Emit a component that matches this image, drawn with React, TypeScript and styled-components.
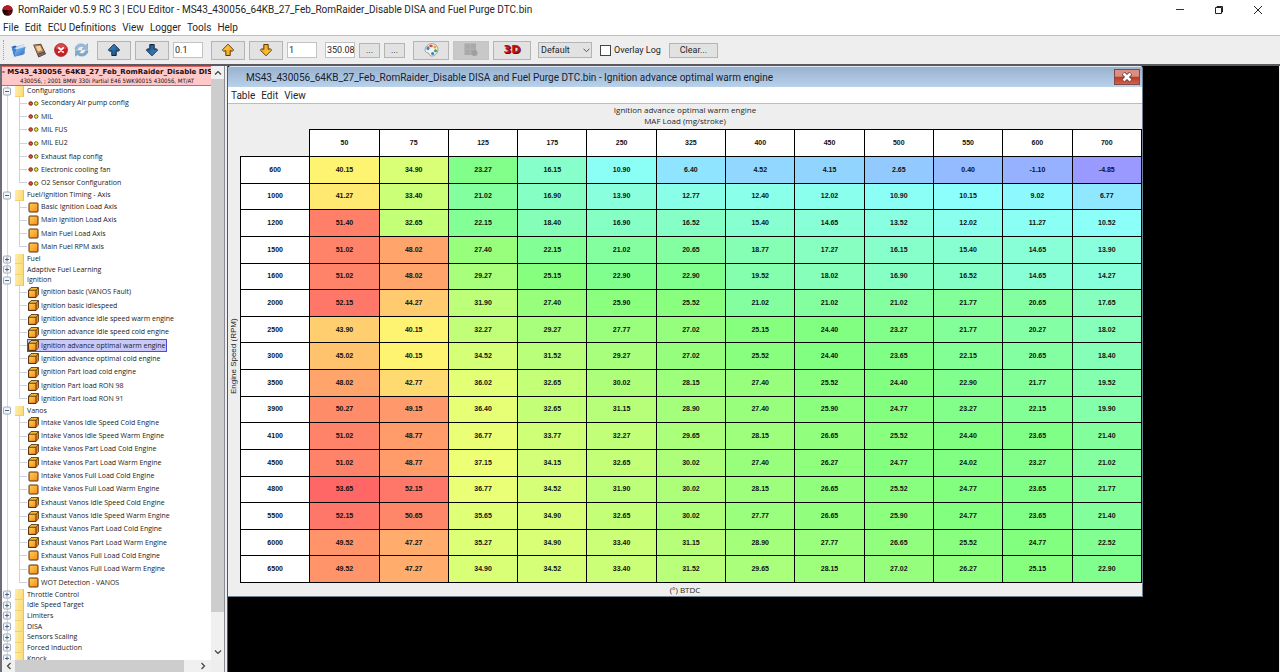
import React from "react";
import styled, { createGlobalStyle } from "styled-components";

const UI_FONT = 'Roboto, "Open Sans", sans-serif';
const TREE_FONT = '"Open Sans", "Noto Sans", sans-serif';
const CELL_FONT = '"Liberation Sans", Arial, sans-serif';

const GlobalStyle = createGlobalStyle`
  * { box-sizing: border-box; }
  body { margin: 0; background: #eeeeee; font-family: ${UI_FONT}; color: #262626; }
  button, input, select { font: inherit; color: inherit; }
`;

const Shell = styled.div`
  display: flex;
  flex-direction: column;
  height: 100vh;
  overflow: hidden;
`;

const TitleBar = styled.header`
  display: flex;
  align-items: center;
  gap: 5px;
  height: 20px;
  padding: 0 14px 0 2px;
  background: #fff;
  flex: none;
`;

const Title = styled.h1`
  margin: 0;
  flex: 1;
  font-size: 10px;
  font-weight: 400;
  line-height: 20px;
  white-space: nowrap;
`;

const WindowControls = styled.div`
  display: flex;
  gap: 23px;
`;

const CaptionButton = styled.button`
  display: flex;
  align-items: center;
  justify-content: center;
  width: 16px;
  height: 16px;
  padding: 0;
  border: 0;
  background: none;
`;

const MenuBar = styled.nav<{ $inner?: boolean }>`
  display: flex;
  gap: 6px;
  height: ${(p) => (p.$inner ? 17 : 16)}px;
  padding: 1px 0 0 3px;
  background: #fff;
  border-bottom: 1px solid #bdbdbd;
  flex: none;
`;

const MenuItem = styled.button`
  padding: 0;
  border: 0;
  background: none;
  font-size: 10px;
  line-height: 14px;
  white-space: nowrap;
`;

const Toolbar = styled.div`
  display: flex;
  align-items: center;
  gap: 8px;
  height: 28px;
  padding-left: 3px;
  background: #eeeeee;
  font-size: 9px;
  flex: none;
`;

const Handle = styled.span`
  height: 20px;
  border-left: 1px dotted #8fa3bd;
  margin-right: -1px;
`;

const ToolGroup = styled.div<{ $gap?: number }>`
  display: flex;
  align-items: center;
  gap: ${(p) => p.$gap ?? 4}px;
`;

const IconButton = styled.button`
  display: flex;
  width: 15px;
  height: 16px;
  padding: 0;
  border: 0;
  background: none;
  align-items: center;
  justify-content: center;
`;

const ToolButton = styled.button<{ $w: number; $short?: boolean }>`
  display: flex;
  align-items: center;
  justify-content: center;
  width: ${(p) => p.$w}px;
  height: ${(p) => (p.$short ? 15 : 19)}px;
  padding: 0;
  border: 1px solid #b4b4b4;
  background: #e2e2e2;
  line-height: 12px;
  &:disabled { background: #c8c8c8; border-color: #c4c4c4; }
`;

const NumberBox = styled.input<{ $w: number }>`
  width: ${(p) => p.$w}px;
  height: 16px;
  padding: 0 0 0 1px;
  border: 1px solid #c2c2c2;
  background: #fff;
`;

const SelectWrap = styled.div`
  position: relative;
  width: 54px;
  height: 16px;
  margin-left: -1px;
  svg { position: absolute; right: 2px; top: 6px; pointer-events: none; }
`;

const Select = styled.select`
  appearance: none;
  width: 100%;
  height: 100%;
  padding: 0 2px;
  border: 1px solid #b4b4b4;
  border-radius: 0;
  background: #e2e2e2;
`;

const CheckLabel = styled.label`
  display: flex;
  align-items: center;
  gap: 3px;
  white-space: nowrap;
`;

const Check = styled.input`
  appearance: none;
  width: 11px;
  height: 11px;
  margin: 0;
  border: 1px solid #444;
  background: #fff;
`;

const ThreeD = styled.span`
  font: 900 11px/12px "DejaVu Sans", sans-serif;
  color: #c01018;
  text-shadow: 1px 1px 0 #5c0a0c;
`;

const Main = styled.div`
  display: flex;
  flex: 1;
  min-height: 0;
  border-top: 2px solid #5a5a60;
`;

const Sidebar = styled.aside`
  display: grid;
  grid-template-columns: 1fr 13px;
  grid-template-rows: 1fr 12px;
  width: 225px;
  flex: none;
  border-left: 2px solid #6e6e78;
  border-right: 1px solid #8a8a92;
  background: #eeeeee;
`;

const TreePane = styled.div`
  min-width: 0;
  overflow: hidden;
  background: #fff;
`;

const RomNode = styled.div`
  height: 20px;
  border: 1px solid #e06060;
  border-width: 1px 0;
  background: #ffc8c8;
  overflow: hidden;
  white-space: nowrap;
  color: #1a1010;
`;

const RomName = styled.strong`
  display: block;
  font: 700 7px/10px "DejaVu Sans", sans-serif;
`;

const RomInfo = styled.span`
  display: block;
  padding-left: 18px;
  font: 6px/8px "DejaVu Sans Condensed", "DejaVu Sans", sans-serif;
`;

const Tree = styled.ul`
  display: flex;
  flex-direction: column;
  height: 578px;
  margin: 0;
  padding: 0 0 0 1px;
  list-style: none;
  font: 7px/10px ${TREE_FONT};
  color: #222;
`;

const Folder = styled.li`
  position: relative;
  display: flex;
  align-items: center;
  flex: 4 0 0;
  min-height: 0;
  white-space: nowrap;
  &::before {
    content: "";
    position: absolute;
    left: 4px;
    top: 0;
    bottom: 0;
    border-left: 1px solid #d5dae2;
  }
`;

const Expander = styled.svg`
  position: relative;
  margin-right: 4px;
  flex: none;
`;

const FolderIcon = styled.span`
  width: 9px;
  align-self: stretch;
  margin-right: 3px;
  border-right: 1px solid #e8c34d;
  border-bottom: 1px solid #f0d070;
  background: linear-gradient(100deg, #ffedaa, #fbdb74);
`;

const Leaf = styled.li<{ $last?: boolean }>`
  position: relative;
  display: flex;
  align-items: center;
  flex: 5 0 0;
  min-height: 0;
  padding-left: 24px;
  white-space: nowrap;
  &::before {
    content: "";
    position: absolute;
    left: 4px;
    width: 12px;
    top: 0;
    bottom: 0;
    border-left: 1px solid #d5dae2;
  }
  &::after {
    content: "";
    position: absolute;
    left: 16px;
    width: 7px;
    top: 0;
    bottom: ${(p) => (p.$last ? "50%" : "0")};
    border-left: 1px solid #ccd3de;
    background: linear-gradient(#ccd3de, #ccd3de) no-repeat 0 ${(p) => (p.$last ? "100%" : "50%")} / 100% 1px;
  }
`;

const LeafBody = styled.span<{ $selected?: boolean }>`
  display: flex;
  align-items: center;
  gap: 2px;
  height: 13px;
  border: 1px solid ${(p) => (p.$selected ? "#4c4cd8" : "transparent")};
  background: ${(p) => (p.$selected ? "#c8c8fa" : "transparent")};
  svg { flex: none; }
`;

const VScroll = styled.div`
  display: flex;
  flex-direction: column;
  align-items: center;
  padding-bottom: 2px;
  background: #f0f0f0;
`;

const VThumb = styled.div`
  flex: 1;
  width: 100%;
  margin-bottom: 33px;
  background: #cdcdcd;
`;

const HScroll = styled.div`
  display: flex;
  align-items: center;
  padding-right: 2px;
  background: #f0f0f0;
`;

const HThumb = styled.div`
  flex: 1;
  height: 100%;
  margin-right: 12px;
  background: #cdcdcd;
`;

const ScrollArrow = styled.button`
  display: flex;
  align-items: center;
  justify-content: center;
  width: 13px;
  height: 13px;
  padding: 0;
  border: 0;
  background: #f0f0f0;
  flex: none;
`;

const Desktop = styled.main`
  flex: 1;
  min-width: 0;
  margin-left: 2px;
  margin-right: 1px;
  padding-right: 136px;
  border-left: 1px solid #55555c;
  background: #000;
`;

const Frame = styled.section`
  display: flex;
  flex-direction: column;
  border: 1px solid #6f7f92;
  border-top-color: #dfe8f2;
  border-left-width: 0;
  border-radius: 3px 3px 0 0;
  background: #eeeeee;
  overflow: hidden;
`;

const FrameTitle = styled.div`
  display: flex;
  align-items: center;
  height: 20px;
  padding: 0 2px 0 18px;
  background: linear-gradient(#98b2cf, #b9d1ea);
`;

const FrameName = styled.h2`
  margin: 0;
  flex: 1;
  font-size: 10px;
  font-weight: 400;
  white-space: nowrap;
  color: #16202c;
`;

const FrameClose = styled.button`
  display: flex;
  align-items: center;
  justify-content: center;
  width: 26px;
  height: 16px;
  padding: 0;
  border: 1px solid #7c4a48;
  background: linear-gradient(#dc8e80 0 45%, #b93a24 50%, #d0604c);
`;

const Caption = styled.div`
  padding-bottom: 3px;
  font: 8px/11px ${TREE_FONT};
  text-align: center;
`;

const FrameBody = styled.div`
  display: flex;
  align-items: stretch;
`;

const AxisLabel = styled.div`
  display: flex;
  align-items: center;
  justify-content: center;
  width: 12px;
  flex: none;
  font: 8px/12px ${CELL_FONT};
  writing-mode: vertical-rl;
  transform: rotate(180deg);
  white-space: nowrap;
`;

const TableArea = styled.div`
  flex: 1;
  min-width: 0;
`;

const Units = styled.div`
  font: 8px/13px ${TREE_FONT};
  text-align: center;
`;

const MapTable = styled.table`
  width: 100%;
  height: 454px;
  border-collapse: collapse;
  table-layout: fixed;
  font: 700 7px/8px ${CELL_FONT};
  text-align: center;
  color: #111;
  th, td { padding: 0; border: 1px solid #000; }
  th { background: #fff; }
  thead tr { height: 27px; }
  thead td { border-top: 0; border-left: 0; }
`;

const ValueCell = styled.td<{ $color: string }>`
  background: ${(p) => p.$color};
`;

const LOADS = [50, 75, 125, 175, 250, 325, 400, 450, 500, 550, 600, 700];

const ROWS: [number, string][] = [
  [600, "40.15 34.90 23.27 16.15 10.90 6.40 4.52 4.15 2.65 0.40 -1.10 -4.85"],
  [1000, "41.27 33.40 21.02 16.90 13.90 12.77 12.40 12.02 10.90 10.15 9.02 6.77"],
  [1200, "51.40 32.65 22.15 18.40 16.90 16.52 15.40 14.65 13.52 12.02 11.27 10.52"],
  [1500, "51.02 48.02 27.40 22.15 21.02 20.65 18.77 17.27 16.15 15.40 14.65 13.90"],
  [1600, "51.02 48.02 29.27 25.15 22.90 22.90 19.52 18.02 16.90 16.52 14.65 14.27"],
  [2000, "52.15 44.27 31.90 27.40 25.90 25.52 21.02 21.02 21.02 21.77 20.65 17.65"],
  [2500, "43.90 40.15 32.27 29.27 27.77 27.02 25.15 24.40 23.27 21.77 20.27 18.02"],
  [3000, "45.02 40.15 34.52 31.52 29.27 27.02 25.52 24.40 23.65 22.15 20.65 18.40"],
  [3500, "48.02 42.77 36.02 32.65 30.02 28.15 27.40 25.52 24.40 22.90 21.77 19.52"],
  [3900, "50.27 49.15 36.40 32.65 31.15 28.90 27.40 25.90 24.77 23.27 22.15 19.90"],
  [4100, "51.02 48.77 36.77 33.77 32.27 29.65 28.15 26.65 25.52 24.40 23.65 21.40"],
  [4500, "51.02 48.77 37.15 34.15 32.65 30.02 27.40 26.27 24.77 24.02 23.27 21.02"],
  [4800, "53.65 52.15 36.77 34.52 31.90 30.02 28.15 26.65 25.52 24.77 23.65 21.77"],
  [5500, "52.15 50.65 35.65 34.90 32.65 30.02 27.77 26.65 25.90 24.77 23.65 21.40"],
  [6000, "49.52 47.27 35.27 34.90 33.40 31.15 28.90 27.77 26.65 25.52 24.77 22.52"],
  [6500, "49.52 47.27 34.90 34.52 33.40 31.52 29.65 28.15 27.02 26.27 25.15 22.90"],
];

const MIN = -4.85;
const MAX = 53.65;

// Blend hue and saturation from violet-blue (lowest value) to red (highest) at full brightness.
function heat(value: number): string {
  const t = (value - MIN) / (MAX - MIN);
  const hue = 240 * (1 - t);
  const sat = 0.4 + 0.2 * t;
  return `hsl(${hue.toFixed(1)} 100% ${((1 - sat / 2) * 100).toFixed(1)}%)`;
}

type Kind = "switch" | "flat" | "cube";
type Group = { name: string; open?: boolean; items?: [Kind, string][] };

const GROUPS: Group[] = [
  {
    name: "Configurations",
    open: true,
    items: [
      ["switch", "Secondary Air pump config"],
      ["switch", "MIL"],
      ["switch", "MIL FUS"],
      ["switch", "MIL EU2"],
      ["switch", "Exhaust flap config"],
      ["switch", "Electronic cooling fan"],
      ["switch", "O2 Sensor Configuration"],
    ],
  },
  {
    name: "Fuel/Ignition Timing - Axis",
    open: true,
    items: [
      ["flat", "Basic Ignition Load Axis"],
      ["flat", "Main Ignition Load Axis"],
      ["flat", "Main Fuel Load Axis"],
      ["flat", "Main Fuel RPM axis"],
    ],
  },
  { name: "Fuel" },
  { name: "Adaptive Fuel Learning" },
  {
    name: "Ignition",
    open: true,
    items: [
      ["cube", "Ignition basic (VANOS Fault)"],
      ["cube", "Ignition basic idlespeed"],
      ["cube", "Ignition advance idle speed warm engine"],
      ["cube", "Ignition advance idle speed cold engine"],
      ["cube", "Ignition advance optimal warm engine"],
      ["cube", "Ignition advance optimal cold engine"],
      ["cube", "Ignition Part load cold engine"],
      ["cube", "Ignition Part load RON 98"],
      ["cube", "Ignition Part load RON 91"],
    ],
  },
  {
    name: "Vanos",
    open: true,
    items: [
      ["cube", "Intake Vanos Idle Speed Cold Engine"],
      ["cube", "Intake Vanos Idle Speed Warm Engine"],
      ["cube", "Intake Vanos Part Load Cold Engine"],
      ["cube", "Intake Vanos Part Load Warm Engine"],
      ["flat", "Intake Vanos Full Load Cold Engine"],
      ["flat", "Intake Vanos Full Load Warm Engine"],
      ["cube", "Exhaust Vanos Idle Speed Cold Engine"],
      ["cube", "Exhaust Vanos Idle Speed Warm Engine"],
      ["cube", "Exhaust Vanos Part Load Cold Engine"],
      ["cube", "Exhaust Vanos Part Load Warm Engine"],
      ["flat", "Exhaust Vanos Full Load Cold Engine"],
      ["flat", "Exhaust Vanos Full Load Warm Engine"],
      ["flat", "WOT Detection - VANOS"],
    ],
  },
  { name: "Throttle Control" },
  { name: "Idle Speed Target" },
  { name: "Limiters" },
  { name: "DISA" },
  { name: "Sensors Scaling" },
  { name: "Forced Induction" },
  { name: "Knock" },
];

const SELECTED = "Ignition advance optimal warm engine";

function LeafIcon({ kind }: { kind: Kind }) {
  if (kind === "switch")
    return (
      <svg width="11" height="11" viewBox="0 0 11 11">
        <circle cx="2.7" cy="5.5" r="1.8" fill="#e0502c" stroke="#6b1c10" strokeWidth=".9" />
        <circle cx="8.2" cy="5.5" r="1.8" fill="#f2ee3a" stroke="#55501a" strokeWidth=".9" />
      </svg>
    );
  if (kind === "flat")
    return (
      <svg width="11" height="11" viewBox="0 0 11 11">
        <rect x="1" y="1" width="9" height="9" rx=".8" fill="url(#amber)" stroke="#5a2c0c" strokeWidth="1" />
      </svg>
    );
  return (
    <svg width="11" height="11" viewBox="0 0 11 11">
      <path d="M.6 3.2 3 .6h7.400v7.200L8 10.400H.6z" fill="#ffc93c" stroke="#4a240a" strokeWidth=".9" strokeLinejoin="round" />
      <path d="M8 3.2 10 1v6.700L8 10z" fill="#e88a1a" />
      <path d="M.6 3.2H8v7.200H.6z" fill="url(#amber)" stroke="#4a240a" strokeWidth=".9" />
      <path d="M8 3.2 10.400.7" stroke="#4a240a" strokeWidth=".8" />
    </svg>
  );
}

function Toggle({ open }: { open?: boolean }) {
  return (
    <Expander width="8" height="9" viewBox="0 0 8 9">
      <rect x=".5" y="1" width="7" height="7" rx="1" fill="#f2f5f8" stroke="#8e9bab" strokeWidth=".8" />
      <path d={open ? "M2 4.5h4" : "M2 4.5h4M4 2.5v4"} stroke="#3a5a80" strokeWidth=".9" />
    </Expander>
  );
}

function Arrow({ down, gold }: { down?: boolean; gold?: boolean }) {
  const id = gold ? "gold" : "blue";
  return (
    <svg width="14" height="14" viewBox="0 0 14 14">
      <path
        transform={down ? "rotate(180 7 7)" : undefined}
        d="M7 1.2 12.6 6.9 11.3 8.300 9.200 7.600v4.900H4.800V7.600L2.700 8.300 1.400 6.9z"
        fill={`url(#${id})`}
        stroke={gold ? "#5c3d08" : "#14263c"}
        strokeWidth="1"
        strokeLinejoin="round"
      />
    </svg>
  );
}

function Chevron({ d }: { d: string }) {
  return (
    <svg width="8" height="8" viewBox="0 0 8 8" fill="none" stroke="#404040" strokeWidth="1.200">
      <path d={d} />
    </svg>
  );
}

const HiddenDefs = styled.svg`
  position: absolute;
`;

function Defs() {
  return (
    <HiddenDefs width="0" height="0">
      <defs>
        <linearGradient id="amber" x1="0" y1="0" x2="1" y2="1">
          <stop offset="0" stopColor="#ffd34e" />
          <stop offset="1" stopColor="#f58a1c" />
        </linearGradient>
        <linearGradient id="blue" x1="0" y1="0" x2="1" y2="1">
          <stop offset="0" stopColor="#3f8fd0" />
          <stop offset="1" stopColor="#154a80" />
        </linearGradient>
        <linearGradient id="gold" x1="0" y1="0" x2="1" y2="1">
          <stop offset="0" stopColor="#ffd04a" />
          <stop offset="1" stopColor="#f09a10" />
        </linearGradient>
        <linearGradient id="folder" x1="0" y1="0" x2="1" y2="1">
          <stop offset="0" stopColor="#8cc4f4" />
          <stop offset="1" stopColor="#2468c0" />
        </linearGradient>
      </defs>
    </HiddenDefs>
  );
}

export default function App() {
  return (
    <Shell>
      <GlobalStyle />
      <Defs />
      <TitleBar>
        <svg width="11" height="11" viewBox="0 0 11 11">
          <circle cx="5.5" cy="5.5" r="5.2" fill="#260a0c" />
          <path d="M.6 4.200C1.500 1.500 4 .3 6.500.5 9 .8 10.500 2.800 10.500 4.600L7 5.600 2.500 5z" fill="#c01622" />
          <path d="M4 6.500h6.200C9.700 8.500 8 10 6.500 10.500z" fill="#6c0c14" />
          <path d="M1 6.200 6 6M5 7.500l2 2" stroke="#000" strokeWidth="1" />
        </svg>
        <Title>RomRaider v0.5.9 RC 3 | ECU Editor - MS43_430056_64KB_27_Feb_RomRaider_Disable DISA and Fuel Purge DTC.bin</Title>
        <WindowControls>
          <CaptionButton aria-label="Minimize">
            <svg width="10" height="10" viewBox="0 0 10 10"><path d="M1 4.500h8" stroke="#333" /></svg>
          </CaptionButton>
          <CaptionButton aria-label="Restore">
            <svg width="10" height="10" viewBox="0 0 10 10" fill="none" stroke="#222">
              <path d="M1.500 2.500h6v6h-6zM3 2.500v-1h5.500v5.500h-1" />
            </svg>
          </CaptionButton>
          <CaptionButton aria-label="Close">
            <svg width="10" height="10" viewBox="0 0 10 10"><path d="M1 1l8 8M9 1L1 9" stroke="#222" /></svg>
          </CaptionButton>
        </WindowControls>
      </TitleBar>
      <MenuBar>
        {["File", "Edit", "ECU Definitions", "View", "Logger", "Tools", "Help"].map((m) => (
          <MenuItem key={m}>{m}</MenuItem>
        ))}
      </MenuBar>
      <Toolbar>
        <Handle />
        <ToolGroup $gap={6}>
          <IconButton aria-label="Open">
            <svg width="15" height="15" viewBox="0 0 15 15">
              <path d="M.6 3.800 4.300 2.600l1.200 1.200 7-2.200 1.200 9-10.500 2.800z" fill="#2a62b0" />
              <path d="M2.500 5.500 12 1.200l2 1.200-1.500 8-9 1.500z" fill="#cfe4fa" />
              <path d="M3.400 13.800 5.600 6.200l9.100-2.500-2.400 8z" fill="url(#folder)" />
              <path d="M.6 3.800 3.400 13.800 5.600 6.200z" fill="#3f86d6" />
            </svg>
          </IconButton>
          <IconButton aria-label="Save">
            <svg width="15" height="15" viewBox="0 0 15 15">
              <path d="M1.200 1.800 9 .8l5 10.200-7.500 3.500z" fill="#3d2a20" />
              <path d="M1.900 2.300 8.600 1.400l3.600 7.400-6.500 2.300z" fill="#b9814a" />
              <path d="M3.600 3.400 8 2.700l2.200 4.500-4.200 1.400z" fill="#f0d2a4" />
              <path d="M6 11.600l6.500-2.400.8 1.600-6.500 2.900z" fill="#6f6f70" />
            </svg>
          </IconButton>
          <IconButton aria-label="Close image">
            <svg width="14" height="14" viewBox="0 0 14 14">
              <circle cx="7" cy="7" r="6.500" fill="#cc1f26" stroke="#8e1218" strokeWidth=".6" />
              <path d="M1.500 5.500a5.600 5.600 0 0 1 11 0C9 7 5 7 1.500 5.500z" fill="#e8636a" opacity=".6" />
              <path d="M4.800 4.800l4.400 4.400M9.200 4.800 4.800 9.200" stroke="#fff" strokeWidth="1.700" strokeLinecap="round" />
            </svg>
          </IconButton>
          <IconButton aria-label="Refresh">
            <svg width="15" height="14" viewBox="0 0 15 14">
              <path d="M1 6.300C1.300 2.800 4.300.7 7.500.9c1.700.1 3 .8 4 1.700L13.500.8v5.500H8l2-2C8 2.600 4.300 3 3.500 6.300z" fill="#9cbedd" stroke="#6f96bc" strokeWidth=".6" />
              <path d="M14 7.700c-.3 3.500-3.300 5.600-6.500 5.400-1.700-.1-3-.8-4-1.700L1.500 13.200V7.700H7l-2 2c2 1.700 5.700 1.300 6.500-2z" fill="#7faace" stroke="#6f96bc" strokeWidth=".6" />
            </svg>
          </IconButton>
        </ToolGroup>
        <ToolGroup>
          <ToolButton $w={34} aria-label="Increase fine"><Arrow /></ToolButton>
          <ToolButton $w={34} aria-label="Decrease fine"><Arrow down /></ToolButton>
          <NumberBox $w={30} aria-label="Fine step" defaultValue="0.1" />
        </ToolGroup>
        <ToolGroup>
          <ToolButton $w={34} aria-label="Increase coarse"><Arrow gold /></ToolButton>
          <ToolButton $w={34} aria-label="Decrease coarse"><Arrow gold down /></ToolButton>
          <NumberBox $w={30} aria-label="Coarse step" defaultValue="1" />
        </ToolGroup>
        <ToolGroup>
          <NumberBox $w={30} aria-label="Value" defaultValue="350.08" />
          <ToolButton $w={21} $short>...</ToolButton>
          <ToolButton $w={21} $short>...</ToolButton>
        </ToolGroup>
        <ToolGroup>
          <ToolButton $w={36} aria-label="Colors">
            <svg width="15" height="14" viewBox="0 0 15 14">
              <path d="M7 .8c4.300-.6 7.200 2.200 6.900 6-.2 3.600-3.100 6.200-6.400 6.200-1.900 0-1.700-1.700-2.500-2.500-1.300-1.200-3.800-.5-3.900-3.300C1 3.900 3.800 1.200 7 .8z" fill="#f2f2ef" stroke="#8d8d86" strokeWidth=".8" />
              <ellipse cx="4" cy="5.200" rx="1.500" ry="2" fill="#3f86c8" />
              <ellipse cx="7" cy="3" rx="1.800" ry="1.300" fill="#e04a30" />
              <circle cx="10.900" cy="4" r="1.500" fill="#f0a02c" />
              <circle cx="11.500" cy="7.700" r="1.500" fill="#3fa244" />
              <circle cx="8.600" cy="10.600" r="1.500" fill="#3a7ac0" />
            </svg>
          </ToolButton>
          <ToolButton $w={36} disabled aria-label="Compare">
            <svg width="14" height="14" viewBox="0 0 14 14">
              <path d="M.5.500h11.500v11.500H.5z" fill="#a9a9a9" />
              <path d="M.5 6.200h11.500M6.200.500v11.500" stroke="#b8b8b8" strokeWidth=".8" />
              <circle cx="10.500" cy="10" r="3" fill="#9f9f9f" />
            </svg>
          </ToolButton>
          <ToolButton $w={38} aria-label="3D view">
            <ThreeD>3D</ThreeD>
          </ToolButton>
        </ToolGroup>
        <SelectWrap>
          <Select aria-label="Scale" defaultValue="Default"><option>Default</option></Select>
          <svg width="7" height="5" viewBox="0 0 7 5"><path d="M.5.700 3.500 3.700 6.500.700" fill="none" stroke="#444" strokeWidth=".9" /></svg>
        </SelectWrap>
        <CheckLabel><Check type="checkbox" />Overlay Log</CheckLabel>
        <ToolButton $w={49} $short>Clear...</ToolButton>
      </Toolbar>
      <Main>
        <Sidebar>
          <TreePane>
            <RomNode>
              <RomName>- MS43_430056_64KB_27_Feb_RomRaider_Disable DIS</RomName>
              <RomInfo>430056, ; 2001 BMW 330i Partial E46 5WK90015 430056, MT/AT</RomInfo>
            </RomNode>
            <Tree>
              {GROUPS.map((g) => (
                <React.Fragment key={g.name}>
                  <Folder>
                    <Toggle open={g.open} />
                    <FolderIcon />
                    {g.name}
                  </Folder>
                  {g.items?.map(([kind, name], i) => (
                    <Leaf key={name} $last={i === g.items!.length - 1}>
                      <LeafBody $selected={name === SELECTED}>
                        <LeafIcon kind={kind} />
                        {name}
                      </LeafBody>
                    </Leaf>
                  ))}
                </React.Fragment>
              ))}
            </Tree>
          </TreePane>
          <VScroll>
            <ScrollArrow aria-label="Scroll up"><Chevron d="M1 5.500 4 2.500l3 3" /></ScrollArrow>
            <VThumb />
            <ScrollArrow aria-label="Scroll down"><Chevron d="M1 2.500l3 3 3-3" /></ScrollArrow>
          </VScroll>
          <HScroll>
            <ScrollArrow aria-label="Scroll left"><Chevron d="M5.500 1 2.500 4l3 3" /></ScrollArrow>
            <HThumb />
            <ScrollArrow aria-label="Scroll right"><Chevron d="M2.500 1l3 3-3 3" /></ScrollArrow>
          </HScroll>
        </Sidebar>
        <Desktop>
          <Frame>
            <FrameTitle>
              <FrameName>MS43_430056_64KB_27_Feb_RomRaider_Disable DISA and Fuel Purge DTC.bin - Ignition advance optimal warm engine</FrameName>
              <FrameClose aria-label="Close table">
                <svg width="12" height="10" viewBox="0 0 12 10">
                  <path d="M2.200 1.200 9.800 8.800M9.800 1.200 2.200 8.800" stroke="#5c2c2a" strokeWidth="4.200" />
                  <path d="M2.500 1.500 9.500 8.500M9.500 1.500 2.500 8.500" stroke="#fff" strokeWidth="2.800" />
                </svg>
              </FrameClose>
            </FrameTitle>
            <MenuBar $inner>
              {["Table", "Edit", "View"].map((m) => (
                <MenuItem key={m}>{m}</MenuItem>
              ))}
            </MenuBar>
            <Caption>
              <div>Ignition advance optimal warm engine</div>
              <div>MAF Load (mg/stroke)</div>
            </Caption>
            <FrameBody>
              <AxisLabel>Engine Speed (RPM)</AxisLabel>
              <TableArea>
                <MapTable>
                  <thead>
                    <tr>
                      <td />
                      {LOADS.map((l) => (
                        <th key={l} scope="col">{l}</th>
                      ))}
                    </tr>
                  </thead>
                  <tbody>
                    {ROWS.map(([rpm, values]) => (
                      <tr key={rpm}>
                        <th scope="row">{rpm}</th>
                        {values.split(" ").map((v, i) => (
                          <ValueCell key={i} $color={heat(Number(v))}>{v}</ValueCell>
                        ))}
                      </tr>
                    ))}
                  </tbody>
                </MapTable>
              </TableArea>
            </FrameBody>
            <Units>(°) BTDC</Units>
          </Frame>
        </Desktop>
      </Main>
    </Shell>
  );
}
